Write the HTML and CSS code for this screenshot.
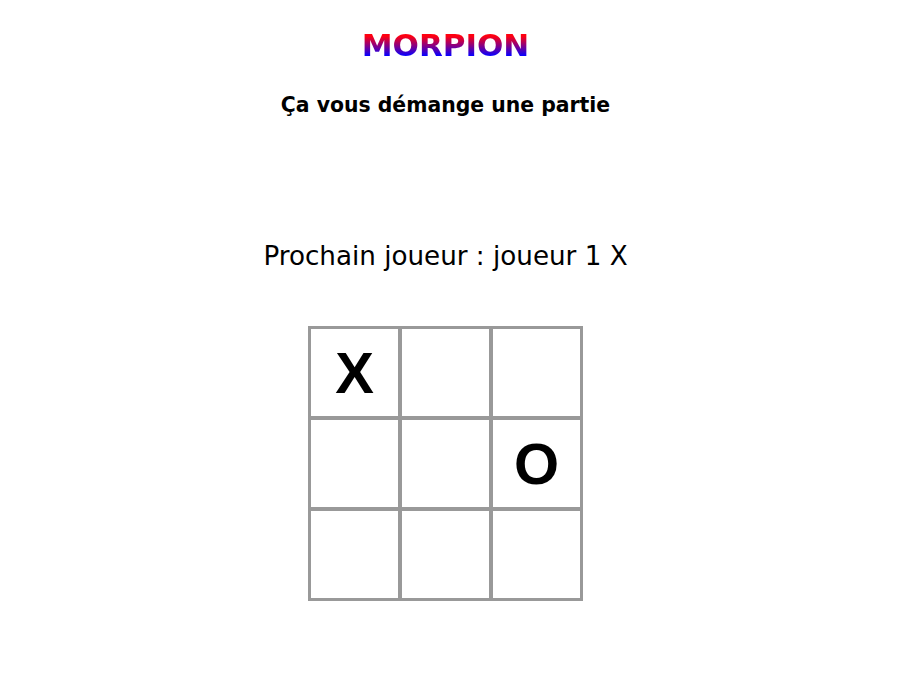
FILE: index.html
```html
<!DOCTYPE html>
<html lang="fr">
<head>
<meta charset="utf-8">
<title>Morpion</title>
<link rel="stylesheet" href="styles.css">
</head>
<body>
<main class="page">
  <h1 class="title">MORPION</h1>
  <p class="subtitle">Ça vous démange une partie</p>
  <p class="status">Prochain joueur : joueur 1 X</p>
  <div class="board">
    <button class="cell">X</button>
    <button class="cell"></button>
    <button class="cell"></button>
    <button class="cell"></button>
    <button class="cell"></button>
    <button class="cell">O</button>
    <button class="cell"></button>
    <button class="cell"></button>
    <button class="cell"></button>
  </div>
</main>
</body>
</html>
```
FILE: styles.css
```css
html, body {
  margin: 0;
  padding: 0;
  background: #fff;
}
.page {
  display: flex;
  flex-direction: column;
  align-items: center;
  font-family: "DejaVu Sans", sans-serif;
  color: #000;
  padding: 32px 17px 0 0;
}
.title {
  margin: 0;
  font-size: 31px;
  line-height: 26px;
  padding: 0 0 2px 0;
  font-weight: bold;
  background: linear-gradient(to bottom, #ff0010 15%, #0800ff 85%);
  -webkit-background-clip: text;
  background-clip: text;
  color: transparent;
}
.subtitle {
  margin: 32px 0 0 0;
  font-size: 20.4px;
  line-height: 26px;
  font-weight: bold;
}
.status {
  margin: 122px 0 0 0;
  font-size: 26.2px;
  line-height: 32px;
  font-weight: 400;
}
.board {
  margin-top: 54px;
  display: grid;
  grid-template-columns: repeat(3, 91px);
  grid-template-rows: repeat(3, 91px);
  border: 1px solid #999;
}
.cell {
  box-sizing: border-box;
  width: 91px;
  height: 91px;
  margin: 0;
  padding: 0;
  border: 2px solid #999;
  background: #fff;
  font-family: "Liberation Sans", Arial, sans-serif;
  font-weight: bold;
  font-size: 58px;
  line-height: 1;
  color: #000;
}
```
